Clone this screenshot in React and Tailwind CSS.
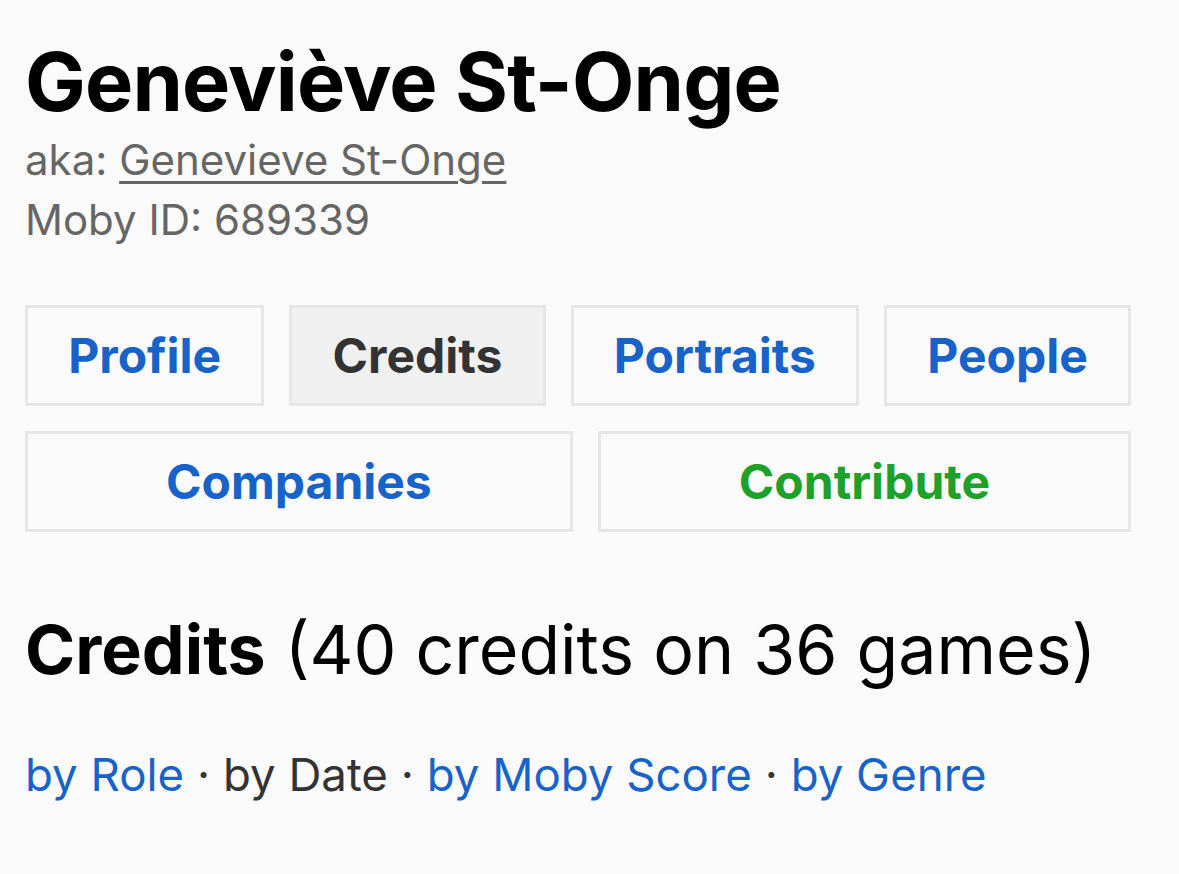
import React from "react";

const tabsTop = [
  { label: "Profile", color: "text-[#1763c9]" },
  { label: "Credits", color: "text-[#333333]", active: true },
  { label: "Portraits", color: "text-[#1763c9]" },
  { label: "People", color: "text-[#1763c9]" },
];

const tabsBottom = [
  { label: "Companies", color: "text-[#1763c9]" },
  { label: "Contribute", color: "text-[#1ea12a]" },
];

const Tab = ({ tab }) => (
  <a
    href="#"
    className={`grow flex items-center justify-center h-[101px] border-[3px] border-[#e6e6e6] text-[48px] font-bold ${tab.color} ${
      tab.active ? "bg-[#f0f0f0]" : "bg-[#fafafa]"
    }`}
  >
    {tab.label}
  </a>
);

export default function App() {
  return (
    <div
      className="min-h-screen bg-[#fafafa] pl-[25px] pt-[34px]"
      style={{ fontFamily: "Inter, 'Noto Sans', sans-serif" }}
    >
      <h1 className="text-[81px] font-bold leading-[96px] text-black tracking-[-0.8px]">
        Geneviève St-Onge
      </h1>
      <div className="text-[42px] leading-[60px] text-[#666666]">
        <p>
          aka:{" "}
          <a href="#" className="underline underline-offset-[6px] decoration-[3px]">
            Genevieve St-Onge
          </a>
        </p>
        <p>Moby ID: 689339</p>
      </div>

      <div className="mt-[55px] w-[1106px] flex flex-col gap-[25px]">
        <div className="flex gap-[25px]">
          {tabsTop.map((t) => (
            <Tab key={t.label} tab={t} />
          ))}
        </div>
        <div className="flex gap-[25px]">
          {tabsBottom.map((t) => (
            <Tab key={t.label} tab={t} />
          ))}
        </div>
      </div>

      <h2 className="mt-[77px] text-[68px] leading-[80px] text-black">
        <span className="font-bold">Credits</span> (40 credits on 36 games)
      </h2>

      <p className="mt-[56px] text-[45.6px] leading-[60px] text-[#333333]">
        <a href="#" className="text-[#1763c9]">by Role</a> · by Date ·{" "}
        <a href="#" className="text-[#1763c9]">by Moby Score</a> ·{" "}
        <a href="#" className="text-[#1763c9]">by Genre</a>
      </p>
    </div>
  );
}
